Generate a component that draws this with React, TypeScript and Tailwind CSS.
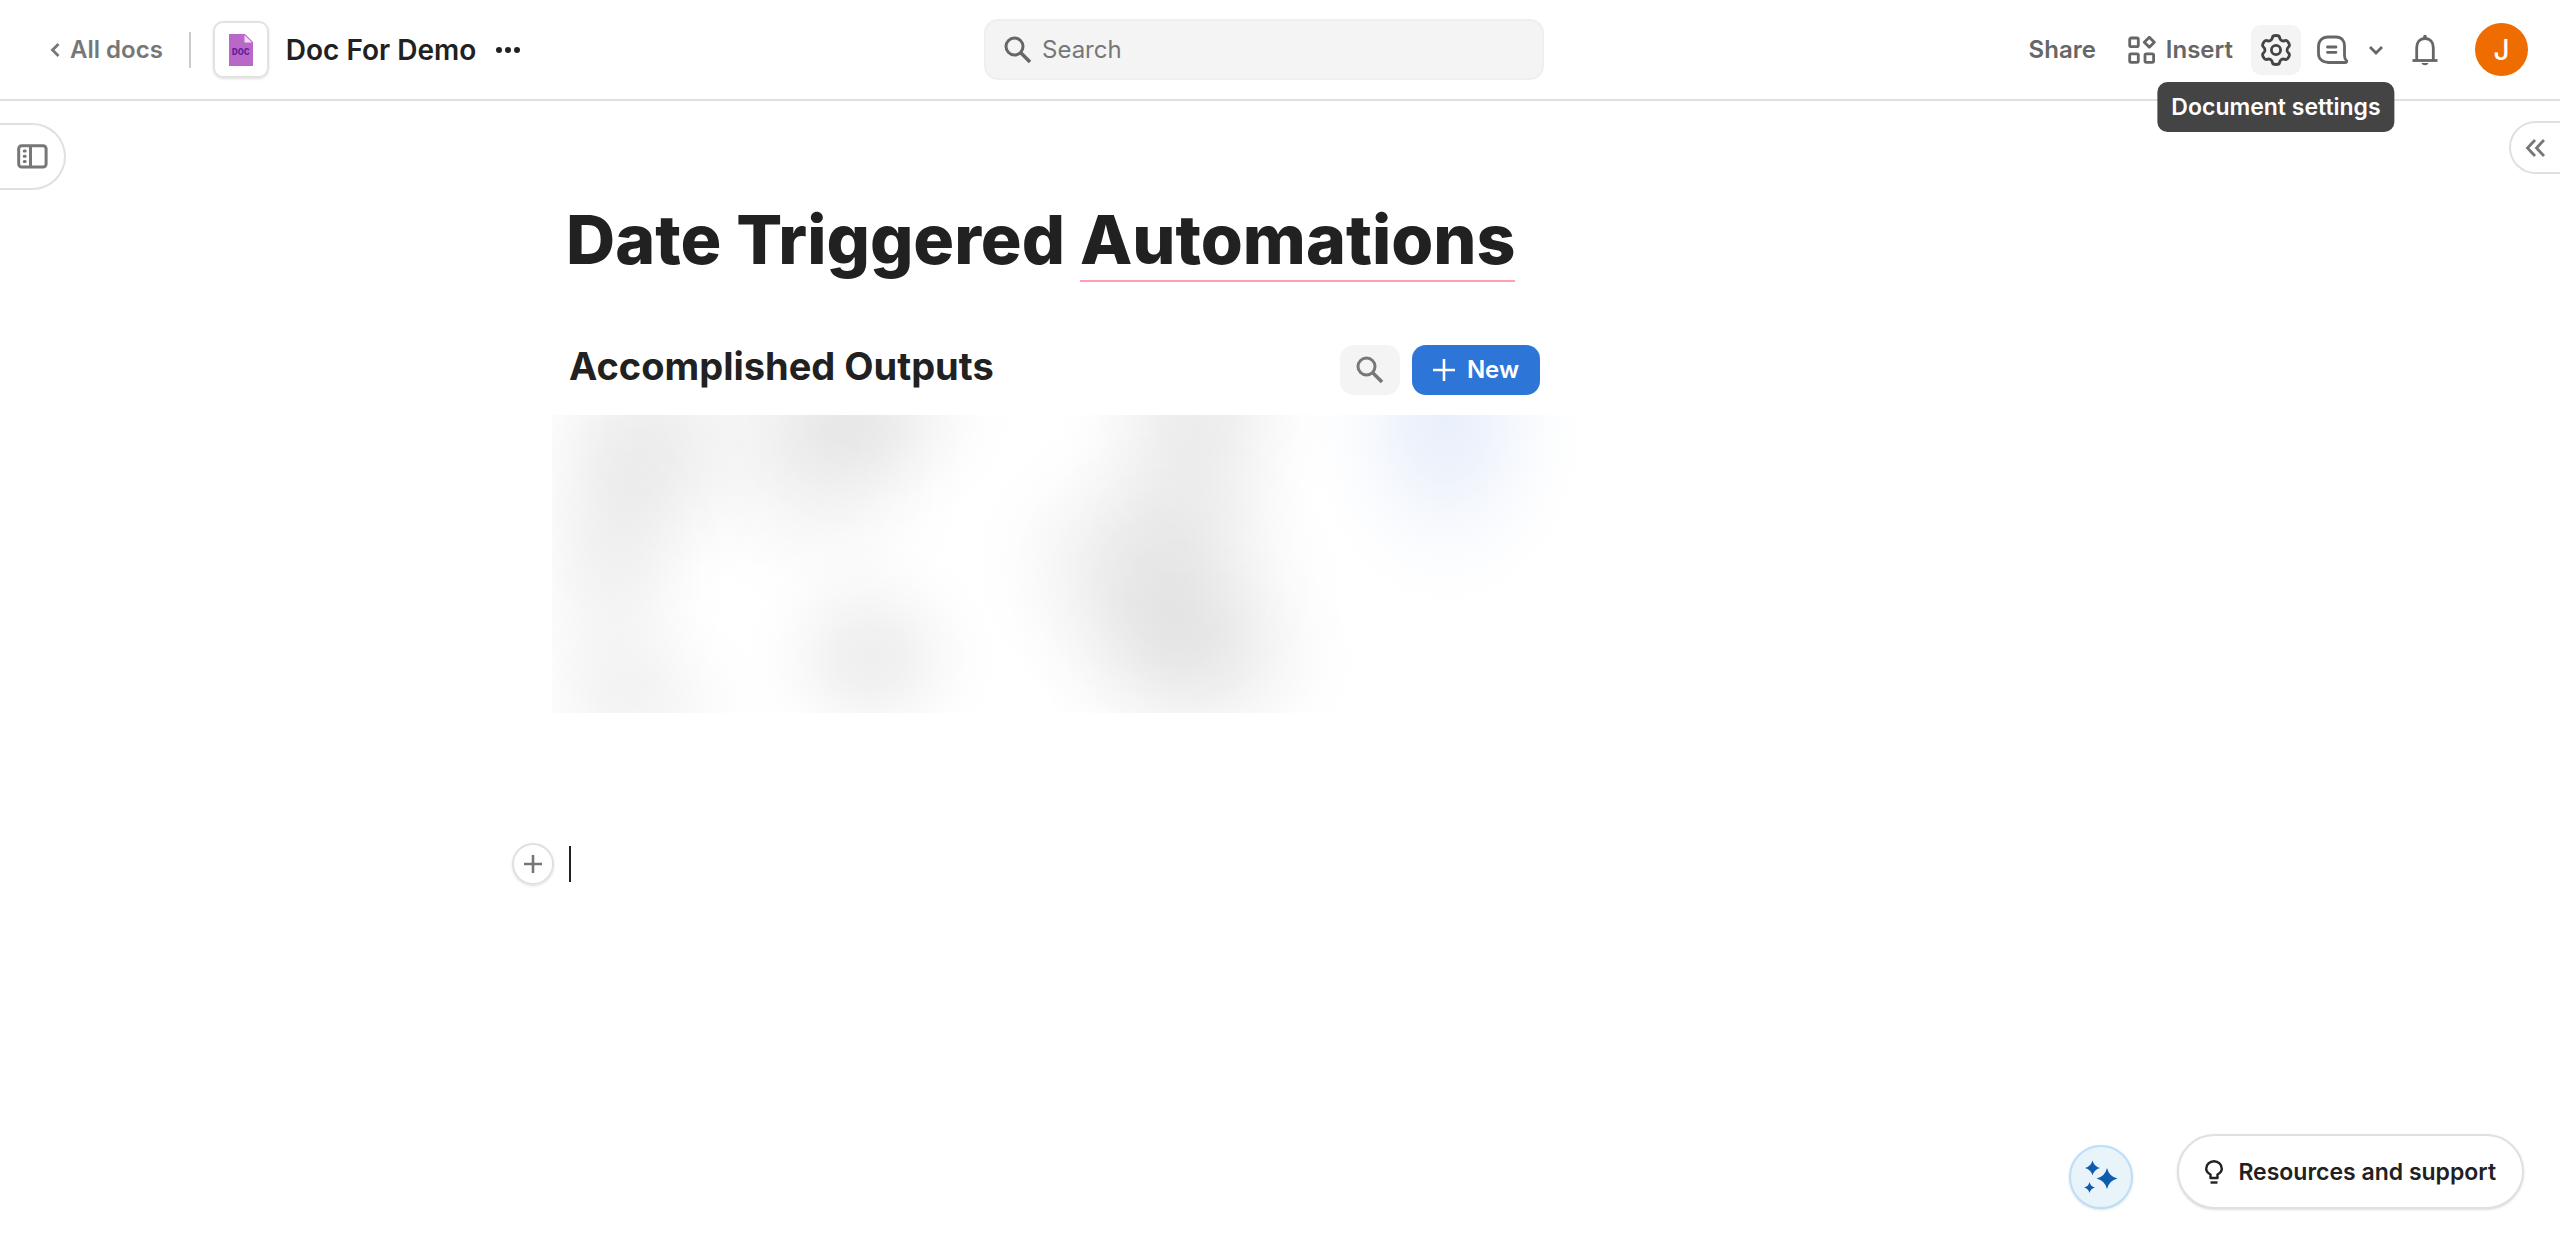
import React from "react";

const blobs = [
  { cx: 85, cy: 40, rx: 140, ry: 170, o: 0.06, blue: false },
  { cx: 60, cy: 165, rx: 120, ry: 180, o: 0.045, blue: false },
  { cx: 85, cy: 290, rx: 140, ry: 110, o: 0.04, blue: false },
  { cx: 180, cy: 10, rx: 200, ry: 170, o: 0.025, blue: false },
  { cx: 315, cy: 0, rx: 150, ry: 120, o: 0.065, blue: false },
  { cx: 275, cy: 60, rx: 150, ry: 160, o: 0.04, blue: false },
  { cx: 319, cy: 242, rx: 130, ry: 120, o: 0.065, blue: false },
  { cx: 645, cy: -5, rx: 140, ry: 190, o: 0.075, blue: false },
  { cx: 595, cy: 150, rx: 180, ry: 160, o: 0.065, blue: false },
  { cx: 625, cy: 180, rx: 190, ry: 190, o: 0.03, blue: false },
  { cx: 645, cy: 245, rx: 165, ry: 130, o: 0.06, blue: false },
  { cx: 894, cy: 5, rx: 140, ry: 190, o: 1, blue: true },
];

function RedactedTable() {
  return (
    <svg
      className="mt-5 block h-[298px] w-full"
      viewBox="0 0 1028 298"
      preserveAspectRatio="none"
      role="img"
      aria-label="Blurred table"
    >
      <defs>
        <radialGradient id="soft">
          <stop offset="0" stopColor="#000" stopOpacity="1" />
          <stop offset="0.25" stopColor="#000" stopOpacity="0.83" />
          <stop offset="0.5" stopColor="#000" stopOpacity="0.43" />
          <stop offset="0.75" stopColor="#000" stopOpacity="0.12" />
          <stop offset="1" stopColor="#000" stopOpacity="0" />
        </radialGradient>
        <radialGradient id="softBlue">
          <stop offset="0" stopColor="#eaf0fb" stopOpacity="1" />
          <stop offset="0.25" stopColor="#eaf0fb" stopOpacity="0.85" />
          <stop offset="0.5" stopColor="#eaf0fb" stopOpacity="0.45" />
          <stop offset="0.75" stopColor="#eaf0fb" stopOpacity="0.14" />
          <stop offset="1" stopColor="#eaf0fb" stopOpacity="0" />
        </radialGradient>
      </defs>
      {blobs.map((b, i) => (
        <ellipse
          key={i}
          cx={b.cx}
          cy={b.cy}
          rx={b.rx}
          ry={b.ry}
          opacity={b.o}
          fill={b.blue ? "url(#softBlue)" : "url(#soft)"}
        />
      ))}
    </svg>
  );
}

function SearchIcon({ className }: { className: string }) {
  return (
    <svg className={className} viewBox="0 0 28 28" fill="none" stroke="currentColor" strokeWidth="3">
      <circle cx="10.5" cy="10.5" r="8.5" />
      <path d="M16.5 16.5L26 26" strokeWidth="3.6" />
    </svg>
  );
}

function DocIcon() {
  return (
    <span className="relative flex h-8 w-6 items-end justify-center">
      <svg className="absolute inset-0 h-8 w-6" viewBox="0 0 24 32">
        <path d="M0 0H16L24 8V32H0Z" fill="#ba68c8" />
        <path d="M15.5 1V8.5H23Z" fill="#f3e0f6" />
      </svg>
      <span className="relative pb-2 font-mono text-[10px] leading-[10px] font-bold text-[#5e1a9a]">DOC</span>
    </span>
  );
}

// Six-toothed cog outline, smoothed by quadratic curves through edge midpoints.
const gearPath = (() => {
  const pts: [number, number][] = [];
  for (let k = 0; k < 6; k++) {
    for (const [a, r] of [[-13, 14.9], [13, 14.9], [20, 11.2], [40, 11.2]]) {
      const t = ((k * 60 + a - 90) * Math.PI) / 180;
      pts.push([16 + r * Math.cos(t), 16 + r * Math.sin(t)]);
    }
  }
  const mid = (i: number) => {
    const p = pts[i % 24];
    const q = pts[(i + 1) % 24];
    return `${((p[0] + q[0]) / 2).toFixed(2)} ${((p[1] + q[1]) / 2).toFixed(2)}`;
  };
  let d = `M${mid(0)}`;
  for (let i = 1; i <= 24; i++) {
    const p = pts[i % 24];
    d += `Q${p[0].toFixed(2)} ${p[1].toFixed(2)} ${mid(i)}`;
  }
  return d + "Z";
})();

function GearIcon() {
  return (
    <svg className="h-8 w-8" viewBox="0 0 32 32" fill="none" stroke="currentColor" strokeWidth="2.8">
      <path d={gearPath} />
      <circle cx="16" cy="16" r="4.6" />
    </svg>
  );
}

export default function App() {
  return (
    <div className="flex min-h-screen flex-col bg-white font-['Inter',sans-serif] text-[#212121]">
      <header className="grid h-[101px] grid-cols-[1fr_560px_1fr] items-center border-b-2 border-[#e0e0e0] pr-8">
        <div className="flex items-center pl-12">
          <a href="#" className="flex items-center gap-2 text-[24px] leading-8 font-semibold text-[#777]">
            <svg className="h-4 w-3.5" viewBox="0 0 14 16" fill="none" stroke="currentColor" strokeWidth="2.8">
              <path d="M10.5 2L4.5 8l6 6" />
            </svg>
            All docs
          </a>
          <span className="ml-[26px] h-9 w-0.5 bg-[#ccc]" />
          <button aria-label="Document icon" className="ml-[22px] flex h-[57px] w-14 items-center justify-center rounded-[10px] border-2 border-[#e2e2e2] shadow">
            <DocIcon />
          </button>
          <span className="ml-[17px] text-[28px] leading-9 font-semibold whitespace-nowrap">Doc For Demo</span>
          <button aria-label="More options" className="ml-5">
            <svg className="h-2 w-6" viewBox="0 0 24 8" fill="currentColor">
              <circle cx="3" cy="4" r="3" />
              <circle cx="12" cy="4" r="3" />
              <circle cx="21" cy="4" r="3" />
            </svg>
          </button>
        </div>
        <label className="flex h-[61px] items-center rounded-[14px] border-2 border-[#efefef] bg-[#f4f4f4] px-[18px] text-[#666]">
          <SearchIcon className="h-7 w-7" />
          <input aria-label="Search" placeholder="Search" className="ml-2.5 min-w-0 flex-1 bg-transparent text-[24px] leading-8 outline-none placeholder:text-[#777]" />
        </label>
        <div className="flex items-center justify-end text-[24px] leading-8 font-semibold text-[#666]">
          <button>Share</button>
          <button className="ml-8 flex items-center gap-2.5">
            <svg className="h-7 w-7" viewBox="0 0 28 28" fill="none" stroke="currentColor" strokeWidth="2.8">
              <rect x="1.7" y="2" width="8.6" height="8.6" rx="1.4" />
              <rect x="1.7" y="17.8" width="8.6" height="8.6" rx="1.4" />
              <rect x="17" y="17.8" width="8.6" height="8.6" rx="1.4" />
              <path d="M21.3 1.200l5 5-5 5-5-5z" strokeLinejoin="round" />
            </svg>
            Insert
          </button>
          <div className="relative ml-[18px]">
            <button aria-label="Document settings" className="flex h-[50px] w-[50px] items-center justify-center rounded-[10px] bg-[#f4f4f4] text-[#444]">
              <GearIcon />
            </button>
            <div role="tooltip" className="absolute top-full left-1/2 mt-[7px] -translate-x-1/2 rounded-[10px] bg-[#444] px-[14px] py-[9px] text-[23px] leading-8 font-semibold whitespace-nowrap text-white">
              Document settings
            </div>
          </div>
          <button aria-label="Comments" className="ml-4">
            <svg className="h-8 w-8" viewBox="0 0 32 32" fill="none" stroke="currentColor" strokeWidth="2.8" strokeLinecap="round" strokeLinejoin="round">
              <path d="M11 3h8c5.500 0 8.500 3.500 8.500 9v9.500c0 2.500.5 3.800 1.900 5 .8.8.3 2-.8 2H11.500c-6 0-10-3.500-10-9v-7C1.500 6.500 5.500 3 11 3z" />
              <path d="M10.500 13h8.500M10.500 18.300h8.500" />
            </svg>
          </button>
          <button aria-label="Comment options" className="ml-[19px]">
            <svg className="h-4 w-4" viewBox="0 0 16 16" fill="none" stroke="currentColor" strokeWidth="2.8">
              <path d="M2 5l6 6 6-6" />
            </svg>
          </button>
          <button aria-label="Notifications" className="ml-[27px]">
            <svg className="h-8 w-7" viewBox="0 0 28 32" fill="none" stroke="currentColor" strokeWidth="2.8">
              <path d="M5.700 26V13.500c0-5.500 3.300-9 8.300-9s8.300 3.500 8.300 9V26" />
              <path d="M1.500 26.500h25" />
              <path d="M14 2.500v1.500" strokeLinecap="round" strokeWidth="3.600" />
              <path d="M10.500 29h7c-1 3-6 3-7 0z" fill="currentColor" stroke="none" />
            </svg>
          </button>
          <button aria-label="Account" className="ml-9 flex h-[53px] w-[53px] items-center justify-center rounded-full bg-[#ef6c00] text-[28px] font-medium text-white">J</button>
        </div>
      </header>

      <main className="flex flex-1 items-start justify-between">
        <button aria-label="Show pages" className="mt-[22px] flex h-[67px] w-[66px] items-center justify-start rounded-r-full border-2 border-l-0 border-[#e0e0e0] pl-[17px] text-[#777]">
          <svg className="h-[25px] w-[31px]" viewBox="0 0 31 25" fill="none" stroke="currentColor" strokeWidth="3">
            <rect x="1.700" y="1.700" width="27.400" height="21.400" rx="3" />
            <path d="M13.500 1.500v22" />
            <path d="M7.200 7h1M7.200 12.300h1M7.200 17.500h1" strokeLinecap="round" />
          </svg>
        </button>
        <article className="ml-[486px] max-w-[1028px] flex-1">
          <h1 className="mt-[94px] pl-[14px] text-[68px] leading-[88px] font-extrabold">
            Date Triggered <span className="border-b-2 border-[#ff9fb0]">Automations</span>
          </h1>
          <div className="mt-[62px] flex items-start justify-between pr-10 pl-[17px]">
            <h2 className="text-[38px] leading-[42px] font-bold">Accomplished Outputs</h2>
            <div className="flex gap-3">
              <button aria-label="Search table" className="flex h-[50px] w-[60px] items-center justify-center rounded-[14px] bg-[#f4f4f4] text-[#777]">
                <SearchIcon className="h-7 w-7" />
              </button>
              <button className="flex h-[50px] w-32 items-center justify-center gap-3 rounded-[14px] bg-[#2e75d8] text-[24px] font-semibold text-white">
                <svg className="h-[22px] w-[22px]" viewBox="0 0 22 22" stroke="currentColor" strokeWidth="2.600">
                  <path d="M11 0v22M0 11h22" />
                </svg>
                New
              </button>
            </div>
          </div>
          <RedactedTable />
          <div className="mt-[130px] -ml-10 flex items-center gap-[15px]">
            <button aria-label="Add block" className="flex h-[42px] w-[42px] items-center justify-center rounded-full border-2 border-[#e0e0e0] text-[#777] shadow-sm">
              <svg className="h-[18px] w-[18px]" viewBox="0 0 18 18" stroke="currentColor" strokeWidth="2.600">
                <path d="M9 0v18M0 9h18" />
              </svg>
            </button>
            <span className="h-9 w-0.5 bg-[#212121]" />
          </div>
        </article>
        <button aria-label="Open side panel" className="mt-5 ml-auto flex h-[53px] w-[51px] items-center rounded-l-full border-2 border-r-0 border-[#e0e0e0] pl-[14px] text-[#777]">
          <svg className="h-5 w-5" viewBox="0 0 20 20" fill="none" stroke="currentColor" strokeWidth="2.800">
            <path d="M10 2L2.500 10l7.500 8M19 2l-7.500 8 7.500 8" />
          </svg>
        </button>
      </main>

      <footer className="flex items-end justify-end gap-11 pr-9 pb-[39px]">
        <button aria-label="AI assistant" className="flex h-16 w-16 items-center justify-center rounded-full border-2 border-[#bbdffa] bg-[#e9f3fa] text-[#0d5cb0] shadow-sm">
          <svg className="h-9 w-9" viewBox="0 0 36 36" fill="currentColor">
            <path d="M24 9q2 8.500 10.500 10.500Q26 21.500 24 30q-2-8.500-10.500-10.500Q22 17.500 24 9z" />
            <path d="M9.500 1.500q1.500 6 7.500 7.500-6 1.500-7.500 7.500Q8 10.500 2 9 8 7.500 9.500 1.500z" />
            <path d="M6.500 23q1 4.500 5.500 5.500-4.500 1-5.500 5.500-1-4.500-5.500-5.500Q5.500 27.500 6.500 23z" />
          </svg>
        </button>
        <button className="flex h-[75px] items-center gap-[15px] rounded-full border-2 border-[#e0e0e0] bg-white px-[26px] text-[23px] leading-8 font-semibold shadow">
          <svg className="h-6 w-[18px]" viewBox="0 0 18 24" fill="none" stroke="currentColor" strokeWidth="2.400">
            <path d="M5.500 18v-3.500C3 13 1.200 11 1.200 8.700a7.800 7.500 0 0 1 15.600 0c0 2.300-1.800 4.300-4.300 5.800V18z" strokeLinejoin="round" />
            <path d="M5.500 22.500h7" />
          </svg>
          Resources and support
        </button>
      </footer>
    </div>
  );
}
